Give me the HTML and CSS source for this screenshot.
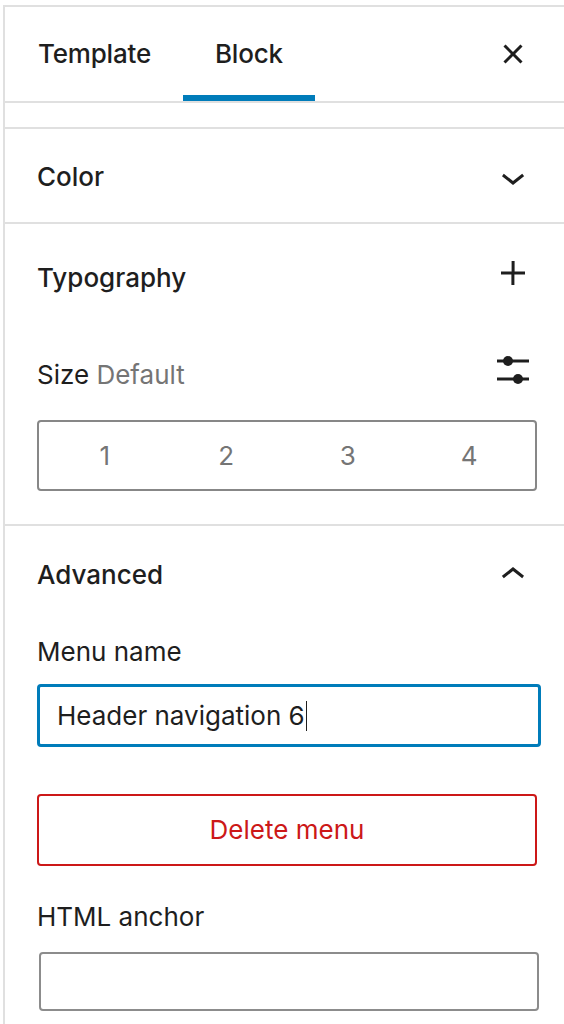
FILE: index.html
```html
<!DOCTYPE html>
<html lang="en">
<head>
<meta charset="utf-8">
<title>Block settings</title>
<link rel="stylesheet" href="styles.css">
</head>
<body>
<aside class="sidebar">
  <header class="tabs-header">
    <button class="tab">Template</button>
    <button class="tab is-active">Block</button>
    <button class="icon-btn close-btn" aria-label="Close settings">
      <svg viewBox="0 0 24 24" width="48" height="48"><path d="M12 13.06l3.712 3.713 1.061-1.06L13.061 12l3.713-3.712-1.06-1.06L12 10.938 8.288 7.227l-1.061 1.06L10.939 12l-3.712 3.712 1.06 1.061L12 13.061z"/></svg>
    </button>
  </header>

  <div class="block-card"></div>

  <section class="panel panel-color">
    <div class="panel-row">
      <h2 class="panel-title">Color</h2>
      <span class="icon-btn">
        <svg viewBox="0 0 24 24" width="48" height="48"><path d="M17.5 11.6L12 16l-5.5-4.4.9-1.2L12 14l4.6-3.6 1 1.2z"/></svg>
      </span>
    </div>
  </section>

  <section class="panel panel-typo">
    <div class="tools-row">
      <h2 class="tools-title">Typography</h2>
      <span class="icon-btn">
        <svg viewBox="0 0 24 24" width="48" height="48"><path d="M18 11.2h-5.2V6h-1.5v5.2H6v1.5h5.2V18h1.5v-5.2H18z"/></svg>
      </span>
    </div>
    <div class="tools-row size-row">
      <div class="size-label">Size <span class="muted">Default</span></div>
      <span class="icon-btn">
        <svg viewBox="0 0 48 48" width="48" height="48">
          <line x1="8" y1="15" x2="40" y2="15" stroke="#1e1e1e" stroke-width="3"/>
          <circle cx="19" cy="15" r="5" fill="#1e1e1e"/>
          <line x1="8" y1="33" x2="40" y2="33" stroke="#1e1e1e" stroke-width="3"/>
          <circle cx="29" cy="33" r="5" fill="#1e1e1e"/>
        </svg>
      </span>
    </div>
    <div class="segmented">
      <span class="seg">1</span>
      <span class="seg">2</span>
      <span class="seg">3</span>
      <span class="seg">4</span>
    </div>
  </section>

  <section class="panel panel-adv">
    <div class="panel-row">
      <h2 class="panel-title">Advanced</h2>
      <span class="icon-btn">
        <svg viewBox="0 0 24 24" width="48" height="48"><path d="M6.5 12.4L12 8l5.5 4.4-.9 1.2L12 10l-4.6 3.6-1-1.2z"/></svg>
      </span>
    </div>
    <div class="field-label label-menu">Menu name</div>
    <div class="text-input is-focused">Header navigation 6<span class="caret"></span></div>
    <div class="delete-btn">Delete menu</div>
    <div class="field-label label-anchor">HTML anchor</div>
    <div class="text-input anchor-input"></div>
  </section>
</aside>
</body>
</html>
```

FILE: styles.css
```css
html, body {
  margin: 0;
  padding: 0;
  background: #ffffff;
}

body {
  font-family: Inter, "Liberation Sans", sans-serif;
  color: #1e1e1e;
  overflow: hidden;
}

.sidebar {
  margin-top: 5px;
  margin-left: 3px;
  border-top: 2px solid #e0e0e0;
  border-left: 2px solid #e0e0e0;
  min-height: calc(100vh - 5px);
  box-sizing: border-box;
}

/* header with tabs */
.tabs-header {
  display: flex;
  align-items: stretch;
  height: 96px;
  box-sizing: border-box;
  border-bottom: 2px solid #e0e0e0;
  padding-right: 27px;
}

.tab {
  font-family: inherit;
  font-size: 26px;
  font-weight: 500;
  line-height: 32px;
  letter-spacing: -0.2px;
  color: #1e1e1e;
  background: none;
  border: none;
  padding: 0 32px;
  margin: 0;
  cursor: pointer;
}

.tab:first-child {
  margin-left: 1px;
}

.tab.is-active {
  box-shadow: inset 0 -6px 0 #007cba;
}

.icon-btn {
  display: flex;
  align-items: center;
  justify-content: center;
  width: 48px;
  height: 48px;
  padding: 0;
  border: none;
  background: none;
  flex-shrink: 0;
}

.icon-btn svg {
  display: block;
  fill: #1e1e1e;
}

.close-btn {
  margin-left: auto;
  align-self: center;
}

.block-card {
  height: 24px;
  border-bottom: 2px solid #e0e0e0;
}

/* panels */
.panel {
  padding: 0 27px 0 32px;
  border-bottom: 2px solid #e0e0e0;
}

.panel-row {
  display: flex;
  align-items: center;
  justify-content: space-between;
  height: 48px;
}

.panel-title,
.tools-title {
  margin: 0;
  font-size: 26px;
  font-weight: 500;
  line-height: 32px;
}

.panel-color {
  padding-top: 24px;
  padding-bottom: 21px;
}

.panel-typo {
  padding-top: 25px;
  padding-bottom: 33px;
}

.tools-row {
  display: flex;
  align-items: flex-start;
  justify-content: space-between;
  height: 48px;
}

.tools-title {
  margin-top: 13px;
}

.size-row {
  margin-top: 49px;
}

.size-label {
  margin-top: 13px;
  font-size: 26px;
  line-height: 32px;
  font-weight: 400;
}

.muted {
  color: #757575;
}

.segmented {
  margin-top: 26px;
  height: 71px;
  box-sizing: border-box;
  border: 2px solid #878787;
  border-radius: 4px;
  padding: 0 5px;
  display: grid;
  grid-template-columns: repeat(4, 1fr);
  align-items: center;
}

.seg {
  text-align: center;
  font-size: 26px;
  line-height: 32px;
  color: #757575;
}

.panel-adv {
  padding-top: 25px;
  padding-bottom: 0;
  border-bottom: none;
}

.field-label {
  font-size: 26px;
  line-height: 32px;
  font-weight: 400;
}

.label-menu {
  margin-top: 37px;
}

.text-input {
  box-sizing: border-box;
  border-radius: 4px;
  font-size: 26px;
  line-height: 32px;
  display: flex;
  align-items: center;
}

.text-input.is-focused {
  margin-top: 16px;
  margin-right: -4px;
  height: 63px;
  border: 3px solid #007cba;
  padding-left: 17px;
  color: #1e1e1e;
}

.caret {
  display: inline-block;
  width: 1.5px;
  height: 30px;
  margin-left: 1px;
  background: #1e1e1e;
}

.delete-btn {
  margin-top: 47px;
  height: 72px;
  box-sizing: border-box;
  border: 2px solid #cc1818;
  border-radius: 4px;
  color: #cc1818;
  font-size: 26px;
  line-height: 32px;
  display: flex;
  align-items: center;
  justify-content: center;
}

.label-anchor {
  margin-top: 35px;
}

.anchor-input {
  margin-top: 19px;
  margin-left: 2px;
  margin-right: -2px;
  height: 59px;
  border: 2px solid #8c8c8c;
}
```
